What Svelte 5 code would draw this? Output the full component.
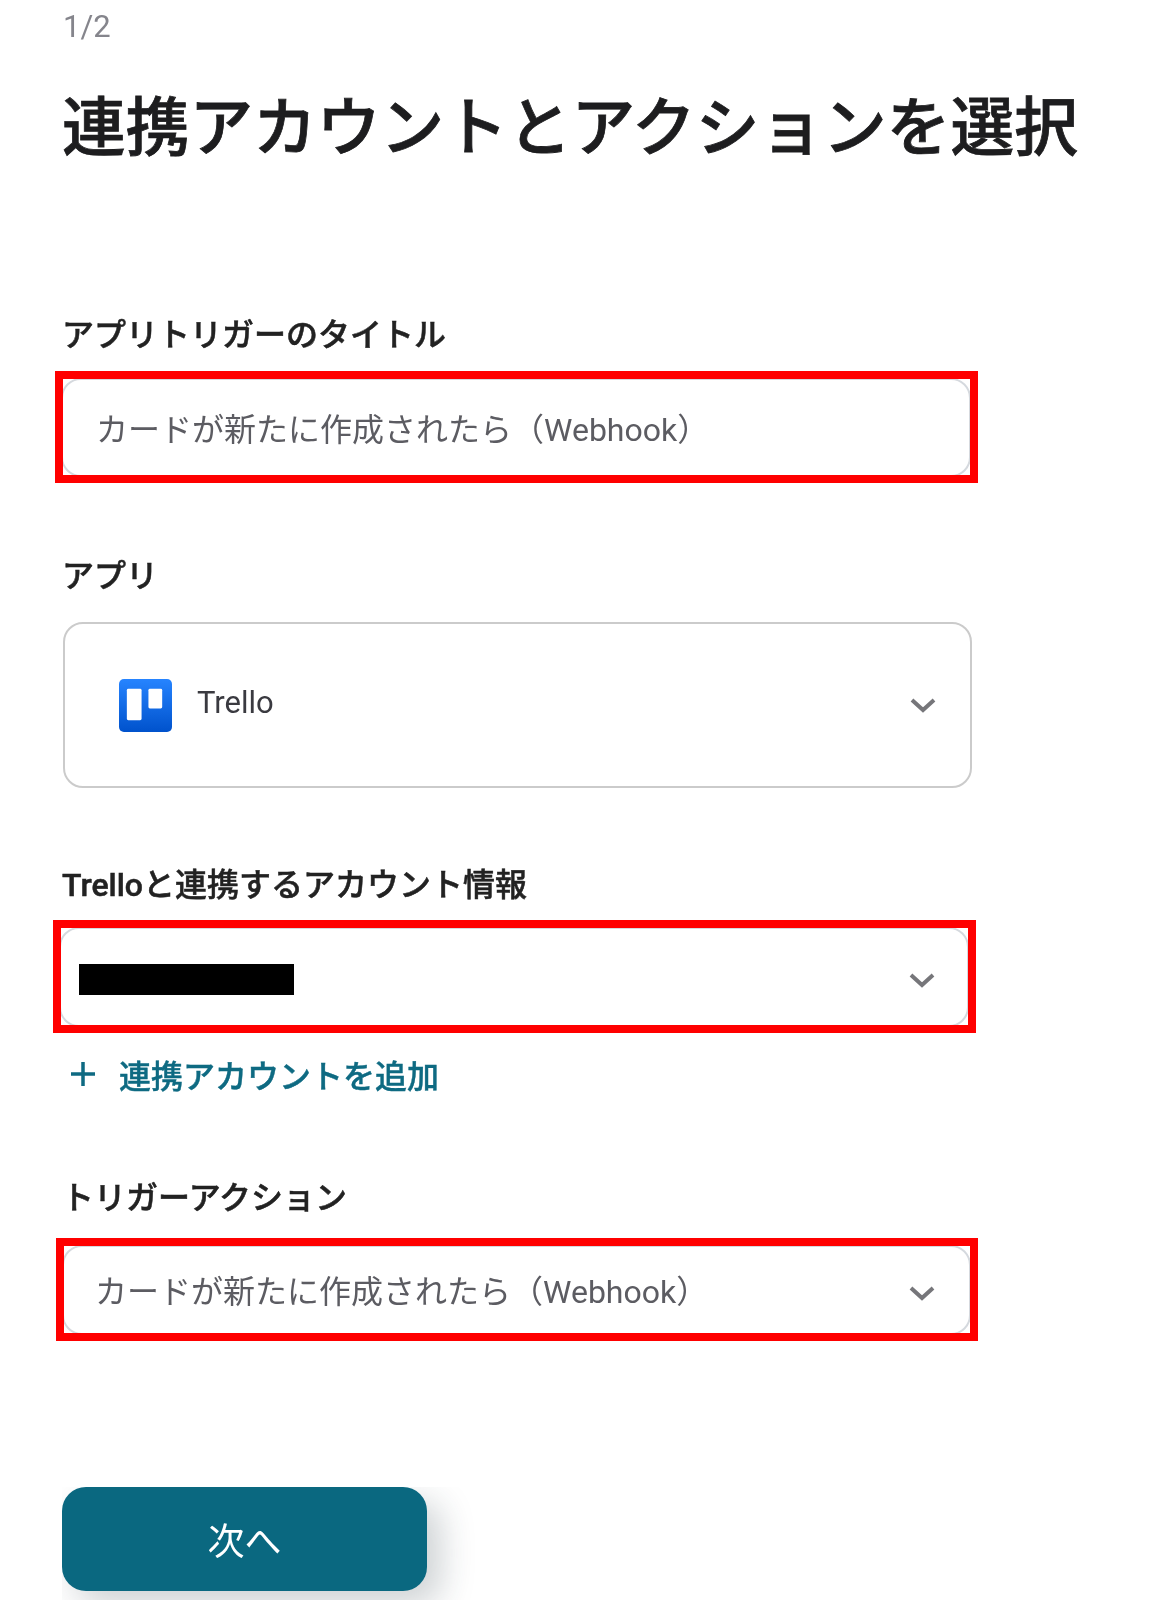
<script lang="ts">
	const actionLabel = 'カードが新たに作成されたら（Webhook）';
</script>

{#snippet chevron()}
	<svg class="chevron" viewBox="0 0 26 16" aria-hidden="true">
		<path d="M2 3l11 10L24 3" />
	</svg>
{/snippet}

<main class="page">
	<p class="step">1/2</p>
	<h1 class="title">連携アカウントとアクションを選択</h1>

	<section class="field first">
		<div class="label">アプリトリガーのタイトル</div>
		<div class="mark mark-title">
			<div class="box slim"><span class="value">{actionLabel}</span></div>
		</div>
	</section>

	<section class="field app">
		<div class="label">アプリ</div>
		<div class="box tall">
			<svg class="trello" viewBox="0 0 54 54" aria-hidden="true">
				<defs>
					<linearGradient id="trello-bg" x1="0" y1="0" x2="0" y2="1">
						<stop offset="0" stop-color="#2684ff" />
						<stop offset="1" stop-color="#0052cc" />
					</linearGradient>
				</defs>
				<rect width="54" height="54" rx="5" fill="url(#trello-bg)" />
				<rect x="8" y="10" width="15" height="32" rx="1.5" fill="#fff" />
				<rect x="30" y="10" width="14" height="20" rx="1.5" fill="#fff" />
			</svg>
			<span class="app-name">Trello</span>
			{@render chevron()}
		</div>
	</section>

	<section class="field account">
		<div class="label">Trelloと連携するアカウント情報</div>
		<div class="mark mark-account">
			<div class="box slim">
				<span class="redacted"></span>
				{@render chevron()}
			</div>
		</div>
		<div class="add-link">
			<svg class="plus" viewBox="0 0 26 26" aria-hidden="true">
				<path d="M13 1v24M1 13h24" />
			</svg>
			<span>連携アカウントを追加</span>
		</div>
	</section>

	<section class="field action">
		<div class="label">トリガーアクション</div>
		<div class="mark mark-action">
			<div class="box slim">
				<span class="value">{actionLabel}</span>
				{@render chevron()}
			</div>
		</div>
	</section>

	<div class="next-clip">
		<button class="next" type="button">次へ</button>
	</div>
</main>

<style>
	:global(body) {
		background: #fff;
	}

	.page {
		box-sizing: border-box;
		width: 1165px;
		height: 1600px;
		overflow: hidden;
		padding: 8px 0 0 63px;
		font-family: Roboto, 'Noto Sans CJK JP', sans-serif;
		color: #222;
		filter: blur(0.35px);
	}

	.step {
		margin: 0;
		font-size: 31px;
		line-height: 38px;
		color: #85858c;
	}

	.title {
		margin: 45px 0 0 -1px;
		font-size: 63.7px;
		line-height: 76px;
		font-weight: 500;
		-webkit-text-stroke: 0.8px #1d1d1f;
		color: #1d1d1f;
		white-space: nowrap;
	}

	.field.first {
		margin-top: 142px;
	}

	.field.app {
		margin-top: 67px;
	}

	.field.account {
		margin-top: 71px;
	}

	.field.action {
		margin-top: 75px;
	}

	.label {
		height: 46px;
		margin-left: -1px;
		font-size: 32px;
		line-height: 52px;
		font-weight: 500;
		-webkit-text-stroke: 0.5px #222;
		color: #222;
		white-space: nowrap;
	}

	/* red annotation frame drawn on top of the screenshot */
	.mark {
		box-sizing: border-box;
		border: 8px solid #f00;
		background: #fff;
		overflow: hidden;
	}

	.mark-title {
		width: 923px;
		height: 112px;
		margin: 16px 0 0 -8px;
	}

	.mark-account {
		width: 923px;
		height: 113px;
		margin: 15px 0 0 -10px;
	}

	.mark-action {
		width: 922px;
		height: 103px;
		margin: 20px 0 0 -7px;
	}

	.box {
		box-sizing: border-box;
		display: flex;
		align-items: center;
		background: #fff;
		border-radius: 20px;
	}

	.box.slim {
		height: calc(100% + 3px);
		margin: -1px -1px -2px -2px;
		border: 2px solid #d5d9de;
		padding: 4px 32px 0 33px;
	}

	.mark-action .box.slim {
		padding: 4px 34px 0 31px;
	}

	.box.tall {
		width: 909px;
		height: 166px;
		margin-top: 26px;
		border: 2px solid #cbcbcb;
		padding: 0 34px 0 54px;
	}

	.value {
		font-size: 32px;
		line-height: 44px;
		color: #5c5c62;
		white-space: nowrap;
	}

	.trello {
		width: 53px;
		height: 53px;
		flex: none;
	}

	.app-name {
		margin-left: 25px;
		margin-top: -4px;
		font-size: 31px;
		line-height: 44px;
		color: #3a3a40;
	}

	.slim .chevron {
		margin-top: 2px;
	}

	.chevron {
		width: 26px;
		height: 16px;
		margin-left: auto;
		flex: none;
		fill: none;
		stroke: #76767a;
		stroke-width: 4;
	}

	.redacted {
		display: block;
		width: 215px;
		height: 31px;
		margin-left: -15px;
		background: #000;
	}

	.add-link {
		display: flex;
		align-items: center;
		gap: 23px;
		height: 46px;
		margin: 18px 0 0 7px;
		font-size: 32px;
		font-weight: 500;
		-webkit-text-stroke: 0.4px #0e6a82;
		color: #0e6a82;
	}

	.plus {
		width: 26px;
		height: 26px;
		flex: none;
		fill: none;
		stroke: #0e6a82;
		stroke-width: 3.5;
	}

	.next-clip {
		width: 500px;
		height: 113px;
		margin: 146px 0 0 -1px;
		overflow: hidden;
	}

	.next {
		display: block;
		width: 365px;
		height: 104px;
		border: none;
		border-radius: 24px;
		background: #0a6880;
		color: #fff;
		font-family: inherit;
		font-size: 37px;
		box-shadow: 14px 14px 34px rgba(30, 50, 60, 0.22);
	}
</style>
